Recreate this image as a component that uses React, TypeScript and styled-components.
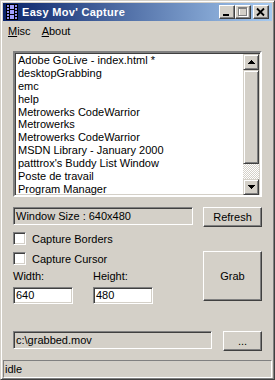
import styled, { createGlobalStyle } from 'styled-components';

const GlobalStyle = createGlobalStyle`
  html, body {
    margin: 0;
    padding: 0;
    background: #d4d0c8;
  }
  body {
    font-family: "Liberation Sans", Arial, sans-serif;
    font-size: 11px;
    color: #000;
  }
  * {
    box-sizing: border-box;
  }
`;

const Window = styled.div`
  width: 275px;
  height: 380px;
  background: #d4d0c8;
  border: 1px solid;
  border-color: #d4d0c8 #404040 #404040 #d4d0c8;
  box-shadow: inset 1px 1px #fff, inset -1px -1px #808080;
  padding: 2px 2px 1px 2px;
  display: flex;
  flex-direction: column;
`;

const TitleBar = styled.div`
  height: 18px;
  flex-shrink: 0;
  display: flex;
  align-items: center;
  padding: 0 3px 0 1px;
  background: linear-gradient(to right, #0a246a, #a6caf0);
`;

const TitleText = styled.span`
  margin-left: 2px;
  color: #fff;
  font-weight: bold;
  font-size: 11px;
  letter-spacing: 0.3px;
  white-space: nowrap;
`;

const CaptionButtons = styled.div`
  margin-left: auto;
  display: flex;
  align-items: center;
`;

const CaptionButton = styled.div<{ $gap?: boolean }>`
  width: 16px;
  height: 14px;
  margin-left: ${p => (p.$gap ? '2px' : '0')};
  background: #d4d0c8;
  border: 1px solid;
  border-color: #fff #404040 #404040 #fff;
  box-shadow: inset -1px -1px #808080;
  display: flex;

  svg {
    display: block;
  }
`;

const MenuBar = styled.div`
  height: 19px;
  flex-shrink: 0;
  display: flex;
  align-items: center;
`;

const MenuItem = styled.span`
  padding: 0 5px;
  margin-right: 1px;
`;

const Content = styled.div`
  flex: 1;
  display: flex;
  flex-direction: column;
  padding: 11px 10px 0;
`;

const ListBox = styled.div`
  height: 146px;
  display: flex;
  background: #fff;
  border: 2px solid;
  border-color: #808080 #fff #fff #808080;
  box-shadow: inset 1px 1px #404040, inset -1px -1px #d4d0c8;
  padding: 0 1px 0 1px;
`;

const ListItems = styled.ul`
  flex: 1;
  margin: 0;
  padding: 0 0 0 2px;
  list-style: none;
  overflow: hidden;
`;

const ListItem = styled.li`
  height: 12.9px;
  line-height: 14px;
  white-space: nowrap;
`;

const ScrollBar = styled.div`
  width: 16px;
  display: flex;
  flex-direction: column;
  margin-top: 1px;
`;

const ScrollButton = styled.div`
  height: 16px;
  flex-shrink: 0;
  background: #d4d0c8;
  border: 1px solid;
  border-color: #d4d0c8 #404040 #404040 #d4d0c8;
  box-shadow: inset 1px 1px #fff, inset -1px -1px #808080;
  display: flex;
  align-items: center;
  justify-content: center;
`;

const ScrollThumb = styled(ScrollButton)`
  height: 94px;
`;

const ScrollTrack = styled.div`
  flex: 1;
  background-image: repeating-conic-gradient(#fff 0 25%, #d4d0c8 0 50%);
  background-size: 2px 2px;
`;

const Controls = styled.div`
  margin-top: 10px;
  display: grid;
  grid-template-columns: 180px 59px;
  column-gap: 10px;
  align-items: start;
`;

const StaticField = styled.div<{ $width?: number }>`
  height: 18px;
  width: ${p => (p.$width ? `${p.$width}px` : 'auto')};
  border: 1px solid;
  border-color: #808080 #fff #fff #808080;
  box-shadow: inset 1px 1px #404040;
  padding: 0 0 0 2px;
  line-height: 16px;
  white-space: nowrap;
`;

const Button = styled.div<{ $width?: number; $height: number; $offset?: number }>`
  width: ${p => (p.$width ? `${p.$width}px` : 'auto')};
  height: ${p => p.$height}px;
  margin-top: ${p => p.$offset ?? 0}px;
  background: #d4d0c8;
  border: 1px solid;
  border-color: #fff #404040 #404040 #fff;
  box-shadow: inset -1px -1px #808080;
  display: flex;
  align-items: center;
  justify-content: center;
`;

const Options = styled.div`
  display: flex;
  flex-direction: column;
`;

const CheckRow = styled.label<{ $offset: number }>`
  margin-top: ${p => p.$offset}px;
  height: 13px;
  display: flex;
  align-items: center;
  gap: 6px;
`;

const CheckBox = styled.span`
  width: 13px;
  height: 13px;
  background: #fff;
  border: 1px solid;
  border-color: #808080 #fff #fff #808080;
  box-shadow: inset 1px 1px #404040, inset -1px -1px #d4d0c8;
`;

const Dimensions = styled.div`
  margin-top: 5px;
  display: flex;
  gap: 20px;
`;

const DimGroup = styled.div`
  display: flex;
  flex-direction: column;
  gap: 4px;
`;

const DimLabel = styled.span`
  height: 13px;
  line-height: 13px;
`;

const TextInput = styled.div`
  width: 60px;
  height: 17px;
  background: #fff;
  border: 1px solid;
  border-color: #808080 #fff #fff #808080;
  box-shadow: inset 1px 1px #404040, inset -1px -1px #d4d0c8;
  padding-left: 2px;
  line-height: 15px;
`;

const PathRow = styled.div`
  margin-top: 27px;
  display: flex;
  justify-content: space-between;
  align-items: flex-start;
`;

const StatusBar = styled.div`
  height: 18px;
  flex-shrink: 0;
  border: 1px solid;
  border-color: #808080 #fff #fff #808080;
  padding-left: 1px;
  line-height: 16px;
`;

const FilmIcon = () => (
  <svg width="16" height="16" viewBox="0 0 16 16">
    <rect x="2" y="0" width="12" height="16" fill="#000" />
    {[1, 4, 7, 10, 13].map(y => (
      <g key={y}>
        <rect x="3" y={y} width="2" height="2" fill="#8c8cf0" />
        <rect x="11" y={y} width="2" height="2" fill="#8c8cf0" />
      </g>
    ))}
    <rect x="6" y="1" width="4" height="4" fill="#a0a0ff" />
    <rect x="6" y="6" width="4" height="4" fill="#a0a0ff" />
    <rect x="6" y="11" width="4" height="4" fill="#a0a0ff" />
  </svg>
);

const MinimizeGlyph = () => (
  <svg width="14" height="12" viewBox="0 0 14 12" shapeRendering="crispEdges">
    <rect x="3" y="8" width="6" height="2" fill="#000" />
  </svg>
);

const MaximizeGlyph = () => (
  <svg width="14" height="12" viewBox="0 0 14 12" shapeRendering="crispEdges">
    <g fill="none" stroke="#fff">
      <rect x="3.5" y="2.5" width="8" height="8" />
    </g>
    <g fill="none" stroke="#808080">
      <rect x="2.5" y="1.5" width="8" height="8" />
      <line x1="2" y1="2.5" x2="11" y2="2.5" />
    </g>
  </svg>
);

const CloseGlyph = () => (
  <svg width="14" height="12" viewBox="0 0 14 12">
    <path d="M3 2.5 L10 9.5 M10 2.5 L3 9.5" stroke="#000" strokeWidth="1.8" />
  </svg>
);

const ArrowUp = () => (
  <svg width="7" height="4" viewBox="0 0 7 4" shapeRendering="crispEdges">
    <path d="M3 0h1v1h1v1h1v1h1v1H0V3h1V2h1V1h1z" fill="#000" />
  </svg>
);

const ArrowDown = () => (
  <svg width="7" height="4" viewBox="0 0 7 4" shapeRendering="crispEdges">
    <path d="M0 0h7v1H6v1H5v1H4v1H3V3H2V2H1V1H0z" fill="#000" />
  </svg>
);

const windows = [
  'Adobe GoLive - index.html *',
  'desktopGrabbing',
  'emc',
  'help',
  'Metrowerks CodeWarrior',
  'Metrowerks',
  'Metrowerks CodeWarrior',
  'MSDN Library - January 2000',
  "patttrox's Buddy List Window",
  'Poste de travail',
  'Program Manager',
];

export default function App() {
  return (
    <>
      <GlobalStyle />
      <Window>
        <TitleBar>
          <FilmIcon />
          <TitleText>Easy Mov' Capture</TitleText>
          <CaptionButtons>
            <CaptionButton><MinimizeGlyph /></CaptionButton>
            <CaptionButton><MaximizeGlyph /></CaptionButton>
            <CaptionButton $gap><CloseGlyph /></CaptionButton>
          </CaptionButtons>
        </TitleBar>

        <MenuBar>
          <MenuItem><u>M</u>isc</MenuItem>
          <MenuItem><u>A</u>bout</MenuItem>
        </MenuBar>

        <Content>
          <ListBox>
            <ListItems>
              {windows.map((w, i) => (
                <ListItem key={i}>{w}</ListItem>
              ))}
            </ListItems>
            <ScrollBar>
              <ScrollButton><ArrowUp /></ScrollButton>
              <ScrollThumb />
              <ScrollTrack />
              <ScrollButton><ArrowDown /></ScrollButton>
            </ScrollBar>
          </ListBox>

          <Controls>
            <StaticField>Window Size : 640x480</StaticField>
            <Button $height={20}>Refresh</Button>

            <Options>
              <CheckRow $offset={5}>
                <CheckBox />
                Capture Borders
              </CheckRow>
              <CheckRow $offset={7}>
                <CheckBox />
                Capture Cursor
              </CheckRow>
              <Dimensions>
                <DimGroup>
                  <DimLabel>Width:</DimLabel>
                  <TextInput>640</TextInput>
                </DimGroup>
                <DimGroup>
                  <DimLabel>Height:</DimLabel>
                  <TextInput>480</TextInput>
                </DimGroup>
              </Dimensions>
            </Options>
            <Button $height={50} $offset={24}>Grab</Button>
          </Controls>

          <PathRow>
            <StaticField $width={199}>c:\grabbed.mov</StaticField>
            <Button $width={39} $height={20}>...</Button>
          </PathRow>
        </Content>

        <StatusBar>idle</StatusBar>
      </Window>
    </>
  );
}
